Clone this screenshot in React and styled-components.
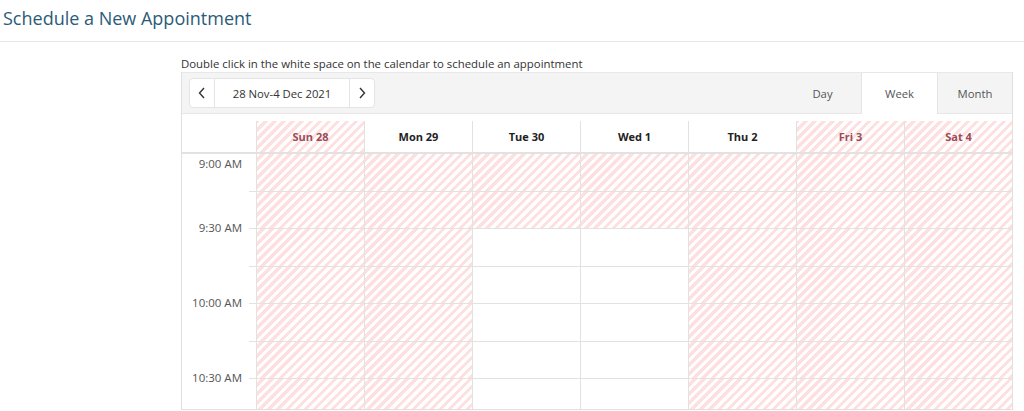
import styled, { createGlobalStyle } from "styled-components";

const GlobalStyle = createGlobalStyle`
  body {
    margin: 0;
    font-family: "Open Sans", "Noto Sans", sans-serif;
    background: #fff;
  }
`;

const stripes = `repeating-linear-gradient(-45deg, #ffe0e0 0 3.2px, #ffffff 3.2px 6.4px)`;

const TitleBar = styled.div`
  height: 42px;
  box-sizing: border-box;
  border-bottom: 1px solid #e6e6e6;
  padding: 6px 0 0 3px;
  font-size: 18px;
  color: #2b5b78;
`;

const Content = styled.div`
  margin-left: 181px;
  width: 832px;
`;

const Hint = styled.div`
  font-size: 11.4px;
  color: #333;
  height: 30px;
  line-height: 16px;
  padding-top: 14px;
  box-sizing: border-box;
`;

const Scheduler = styled.div`
  border: 1px solid #e0e0e0;
  border-top: none;
  height: 338px;
  overflow: hidden;
  box-sizing: border-box;
`;

const Toolbar = styled.div`
  display: flex;
  align-items: stretch;
  height: 42px;
  background: #f4f4f4;
  border-top: 1px solid #e8e8e8;
  border-bottom: 1px solid #e8e8e8;
  box-sizing: border-box;
`;

const NavGroup = styled.div`
  display: flex;
  align-self: center;
  margin-left: 7px;
  height: 28px;
  background: #fff;
  border: 1px solid #e4e4e4;
  border-radius: 4px;
`;

const NavButton = styled.div`
  width: ${(p) => p.w}px;
  display: flex;
  align-items: center;
  justify-content: center;
  color: #333;
  font-size: 11.3px;
  border-left: ${(p) => (p.sep ? "1px solid #e4e4e4" : "none")};
`;

const Spacer = styled.div`
  flex: 1;
`;

const ViewTab = styled.div`
  width: ${(p) => p.w}px;
  box-sizing: border-box;
  display: flex;
  align-items: center;
  justify-content: center;
  font-size: 11.3px;
  color: #555;
  margin-bottom: -1px;
  background: ${(p) => (p.active ? "#fff" : "transparent")};
  border-left: ${(p) => (p.active ? "1px solid #e4e4e4" : "none")};
  border-right: ${(p) => (p.active ? "1px solid #e4e4e4" : "none")};
`;

const HeaderRow = styled.div`
  display: flex;
  margin-top: 7px;
  height: 31px;
  border-bottom: 2px solid #e2e2e2;
`;

const Corner = styled.div`
  width: 74px;
  flex: none;
`;

const DayHead = styled.div`
  flex: 1;
  display: flex;
  align-items: center;
  justify-content: center;
  font-size: 11px;
  font-weight: 700;
  color: ${(p) => (p.off ? "#9b4b57" : "#222")};
  background: ${(p) => (p.off ? stripes : "#fff")};
  border-left: 1px solid #e2e2e2;
`;

const Body = styled.div`
  display: flex;
`;

const TimeColumn = styled.div`
  width: 74px;
  flex: none;
`;

const TimeCell = styled.div`
  position: relative;
  height: 75px;
  box-sizing: border-box;
  &::before,
  &::after {
    content: "";
    position: absolute;
    right: 0;
    width: 7px;
    height: 1px;
    background: #e2e2e2;
  }
  &::before {
    top: 37px;
  }
  &::after {
    bottom: 0;
  }
`;

const TimeLabel = styled.div`
  text-align: right;
  padding-right: 14px;
  font-size: 11.5px;
  line-height: 16px;
  color: #555;
  transform: translateY(${(p) => (p.first ? "2px" : "-9px")});
`;

const DayColumn = styled.div`
  flex: 1;
  border-left: 1px solid #e2e2e2;
`;

const Slot = styled.div`
  height: 37.5px;
  box-sizing: border-box;
  border-bottom: 1px solid #e2e2e2;
  background: ${(p) => (p.off ? stripes : "#fff")};
`;

const days = [
  { label: "Sun 28", off: true, free: 0 },
  { label: "Mon 29", off: false, free: 0 },
  { label: "Tue 30", off: false, free: 2 },
  { label: "Wed 1", off: false, free: 2 },
  { label: "Thu 2", off: false, free: 0 },
  { label: "Fri 3", off: true, free: 0 },
  { label: "Sat 4", off: true, free: 0 },
];

const times = ["9:00 AM", "9:30 AM", "10:00 AM", "10:30 AM"];
const slotCount = 8;

const Chevron = ({ dir }) => (
  <svg width="10" height="12" viewBox="0 0 10 12" fill="none">
    <path
      d={dir === "left" ? "M7 1 L2.5 6 L7 11" : "M3 1 L7.5 6 L3 11"}
      stroke="#333"
      strokeWidth="1.4"
    />
  </svg>
);

export default function App() {
  return (
    <>
      <GlobalStyle />
      <TitleBar>Schedule a New Appointment</TitleBar>
      <Content>
        <Hint>Double click in the white space on the calendar to schedule an appointment</Hint>
        <Scheduler>
          <Toolbar>
            <NavGroup>
              <NavButton w={24}>
                <Chevron dir="left" />
              </NavButton>
              <NavButton w={134} sep>
                28 Nov-4 Dec 2021
              </NavButton>
              <NavButton w={24} sep>
                <Chevron dir="right" />
              </NavButton>
            </NavGroup>
            <Spacer />
            <ViewTab w={77}>Day</ViewTab>
            <ViewTab w={77} active>Week</ViewTab>
            <ViewTab w={74}>Month</ViewTab>
          </Toolbar>
          <HeaderRow>
            <Corner />
            {days.map((d) => (
              <DayHead key={d.label} off={d.off}>
                {d.label}
              </DayHead>
            ))}
          </HeaderRow>
          <Body>
            <TimeColumn>
              {times.map((t, i) => (
                <TimeCell key={t}>
                  <TimeLabel first={i === 0}>{t}</TimeLabel>
                </TimeCell>
              ))}
            </TimeColumn>
            {days.map((d) => (
              <DayColumn key={d.label}>
                {Array.from({ length: slotCount }).map((_, i) => (
                  <Slot key={i} off={d.off || d.free === 0 || i < d.free} />
                ))}
              </DayColumn>
            ))}
          </Body>
        </Scheduler>
      </Content>
    </>
  );
}
